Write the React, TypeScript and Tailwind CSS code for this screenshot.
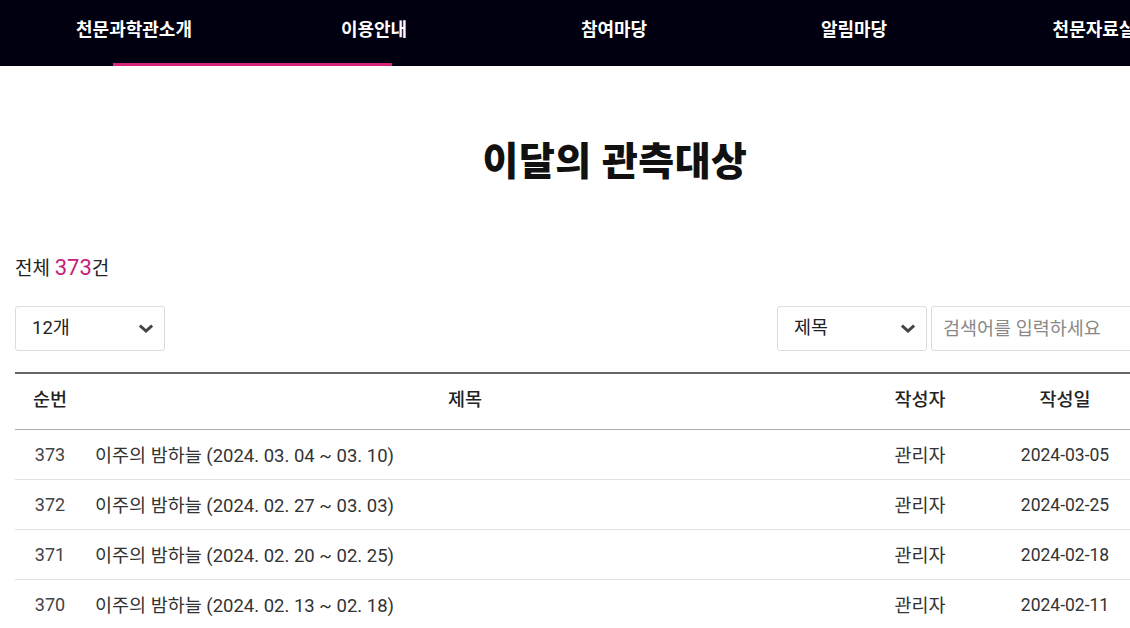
const font = { fontFamily: "Roboto, 'Noto Sans CJK KR', sans-serif" };

const menus = ["천문과학관소개", "이용안내", "참여마당", "알림마당", "천문자료실"];

const rows = [
  { no: 373, title: "이주의 밤하늘 (2024. 03. 04 ~ 03. 10)", date: "2024-03-05" },
  { no: 372, title: "이주의 밤하늘 (2024. 02. 27 ~ 03. 03)", date: "2024-02-25" },
  { no: 371, title: "이주의 밤하늘 (2024. 02. 20 ~ 02. 25)", date: "2024-02-18" },
  { no: 370, title: "이주의 밤하늘 (2024. 02. 13 ~ 02. 18)", date: "2024-02-11" },
];

function Chevron() {
  return (
    <svg width="14" height="10" viewBox="0 0 14 10" className="text-[#444]">
      <polyline
        points="2,2.5 7,7 12,2.5"
        fill="none"
        stroke="currentColor"
        strokeWidth="3"
        strokeLinecap="square"
      />
    </svg>
  );
}

export default function App() {
  return (
    <div className="w-[1130px] h-[628px] overflow-hidden bg-white" style={font}>
      {/* GNB */}
      <nav className="relative h-[66px] bg-[#010010]">
        <div className="ml-[14px] w-[1200px] flex">
          {menus.map((m) => (
            <div
              key={m}
              className="w-[240px] h-[58px] flex items-center justify-center text-white text-[18px] font-bold"
            >
              {m}
            </div>
          ))}
        </div>
        <div className="absolute left-[113px] bottom-0 w-[279px] h-[3px] bg-[#d6257a]" />
      </nav>

      <div className="ml-[15px] w-[1200px]">
        <h2 className="pt-[70px] h-[186px] text-center text-[39px] font-black text-[#111] leading-[52px] tracking-[0.5px]">
          이달의 관측대상
        </h2>

        <p className="mt-[2px] text-[19px] text-[#222] leading-[28px]">
          전체 <span className="text-[22px] text-[#c8207a]">373</span>건
        </p>

        {/* controls */}
        <div className="mt-[23px] flex items-center">
          <div className="w-[150px] h-[45px] border border-[#dcdcdc] rounded-[3px] flex items-center justify-between pl-[16px] pr-[11px] text-[18.5px] text-[#222]">
            <span>12개</span>
            <Chevron />
          </div>
          <div className="ml-auto flex gap-[4px]">
            <div className="w-[150px] h-[45px] border border-[#dcdcdc] rounded-[3px] flex items-center justify-between pl-[16px] pr-[11px] text-[18.5px] text-[#222]">
              <span>제목</span>
              <Chevron />
            </div>
            <input
              className="w-[284px] h-[45px] border border-[#dcdcdc] rounded-[3px] px-[11px] text-[18.5px] text-[#222] placeholder:text-[#888] outline-none"
              placeholder="검색어를 입력하세요"
            />
          </div>
        </div>

        {/* board */}
        <table className="mt-[21px] w-full border-t-2 border-[#666] table-fixed border-collapse">
          <colgroup>
            <col className="w-[70px]" />
            <col className="w-[760px]" />
            <col className="w-[150px]" />
            <col className="w-[140px]" />
            <col className="w-[80px]" />
          </colgroup>
          <thead>
            <tr className="h-[56px] border-b border-[#aaa] text-[18.5px] text-[#222]">
              <th className="font-medium">순번</th>
              <th className="font-medium">제목</th>
              <th className="font-medium">작성자</th>
              <th className="font-medium">작성일</th>
              <th className="font-medium">조회</th>
            </tr>
          </thead>
          <tbody>
            {rows.map((r) => (
              <tr key={r.no} className="h-[50px] border-b border-[#dde2e6] text-[#333]">
                <td className="pt-[1px] text-center text-[18px] text-[#444]">{r.no}</td>
                <td className="pt-[5px] pl-[10px] text-[18.5px]">{r.title}</td>
                <td className="pt-[5px] text-center text-[18.5px]">관리자</td>
                <td className="pt-[3px] text-center text-[17.5px]">{r.date}</td>
                <td className="pt-[3px] text-center text-[17px]">120</td>
              </tr>
            ))}
          </tbody>
        </table>
      </div>
    </div>
  );
}
